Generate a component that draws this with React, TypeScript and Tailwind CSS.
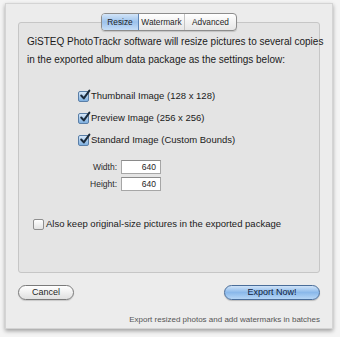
import React from 'react'

const font = { fontFamily: '"Liberation Sans", Arial, sans-serif' }

function AquaCheck({ checked }: { checked: boolean }) {
  return (
    <span
      className={
        'relative inline-block w-[11px] h-[11px] rounded-[2px] border shrink-0 ' +
        (checked
          ? 'border-[#5a7fa8] bg-gradient-to-b from-[#d6e7f8] to-[#7fb0e0]'
          : 'border-[#8e8e8e] bg-gradient-to-b from-[#ffffff] to-[#e2e2e2]')
      }
    >
      {checked && (
        <svg viewBox="0 0 12 12" className="absolute left-[0px] top-[-3px] w-[12px] h-[12px]">
          <path d="M2.2 6.5 L4.8 9.4 L10.4 1.6" fill="none" stroke="#1b2a3a" strokeWidth="2" strokeLinecap="round" strokeLinejoin="round" />
        </svg>
      )}
    </span>
  )
}

function CheckRow({ label, checked, className }: { label: string; checked: boolean; className?: string }) {
  return (
    <div className={'flex items-center gap-[2px] h-[14px] text-[9.5px] text-[#1a1a1a] whitespace-nowrap ' + (className || '')}>
      <AquaCheck checked={checked} />
      <span>{label}</span>
    </div>
  )
}

function Field({ label, value }: { label: string; value: string }) {
  return (
    <div className="flex items-center h-[14px]">
      <span className="w-[94px] text-right text-[8.5px] text-[#2a2a2a] pr-[4px]">{label}</span>
      <div className="w-[40px] h-[14px] bg-white border border-[#a6a6a6] border-t-[#8a8a8a] text-right text-[8.5px] leading-[12px] pr-[4px] text-[#1e1e1e]">
        {value}
      </div>
    </div>
  )
}

export default function App() {
  return (
    <div className="w-[340px] h-[337px] bg-[#f4f4f4] pl-[5px] pt-[3px] overflow-hidden" style={font}>
      <div className="w-[328px] h-[326px] bg-[#ececec] border border-[#d4d4d4] shadow-[0_2px_4px_rgba(0,0,0,0.35)] px-[12px] pt-[9px] flex flex-col">
        <div className="relative z-10 flex justify-center">
          <div className="flex h-[18px] rounded-[4px] border border-[#8d8d8d] bg-gradient-to-b from-[#ffffff] to-[#e6e6e6] text-[8.3px] text-[#1e1e1e] overflow-hidden shadow-[0_1px_1px_rgba(0,0,0,0.15)] whitespace-nowrap">
            <div className="w-[37px] flex items-center justify-center bg-gradient-to-b from-[#d3e5f8] via-[#9cc2ec] to-[#c6def7] border-r border-[#5c84b6]">
              Resize
            </div>
            <div className="w-[46px] flex items-center justify-center border-r border-[#c4c4c4]">Watermark</div>
            <div className="w-[51px] flex items-center justify-center">Advanced</div>
          </div>
        </div>
        <div className="-mt-[9px] h-[251px] border border-[#c6c6c6] rounded-[3px] bg-[#e4e4e4] pl-[8px] pt-[10px] flex flex-col">
          <p className="text-[10px] leading-[18px] text-[#1a1a1a] whitespace-nowrap">
            GiSTEQ PhotoTrackr software will resize pictures to several copies
            <br />
            in the exported album data package as the settings below:
          </p>
          <div className="ml-[51px] mt-[20px] flex flex-col gap-[8px]">
            <CheckRow label="Thumbnail Image (128 x 128)" checked />
            <CheckRow label="Preview Image (256 x 256)" checked />
            <CheckRow label="Standard Image (Custom Bounds)" checked />
          </div>
          <div className="mt-[13px] flex flex-col gap-[3px]">
            <Field label="Width:" value="640" />
            <Field label="Height:" value="640" />
          </div>
          <CheckRow className="mt-[26px] ml-[6px]" label="Also keep original-size pictures in the exported package" checked={false} />
        </div>
        <div className="mt-[12px] flex justify-between">
          <button className="w-[56px] h-[15px] rounded-full border border-[#7a7a7a] bg-gradient-to-b from-[#ffffff] to-[#e0e0e0] text-[9px] leading-[13px] text-[#1e1e1e] shadow-[0_1px_1px_rgba(0,0,0,0.15)]">
            Cancel
          </button>
          <button className="w-[96px] h-[15px] rounded-full border border-[#4a6d99] bg-gradient-to-b from-[#cfe3f8] via-[#8ab8ea] to-[#b6d6f6] text-[9px] leading-[13px] text-[#10203a] shadow-[0_1px_1px_rgba(0,0,0,0.2)]">
            Export Now!
          </button>
        </div>
        <div className="mt-[14px] text-right text-[8px] text-[#555555] whitespace-nowrap">
          Export resized photos and add watermarks in batches
        </div>
      </div>
    </div>
  )
}
